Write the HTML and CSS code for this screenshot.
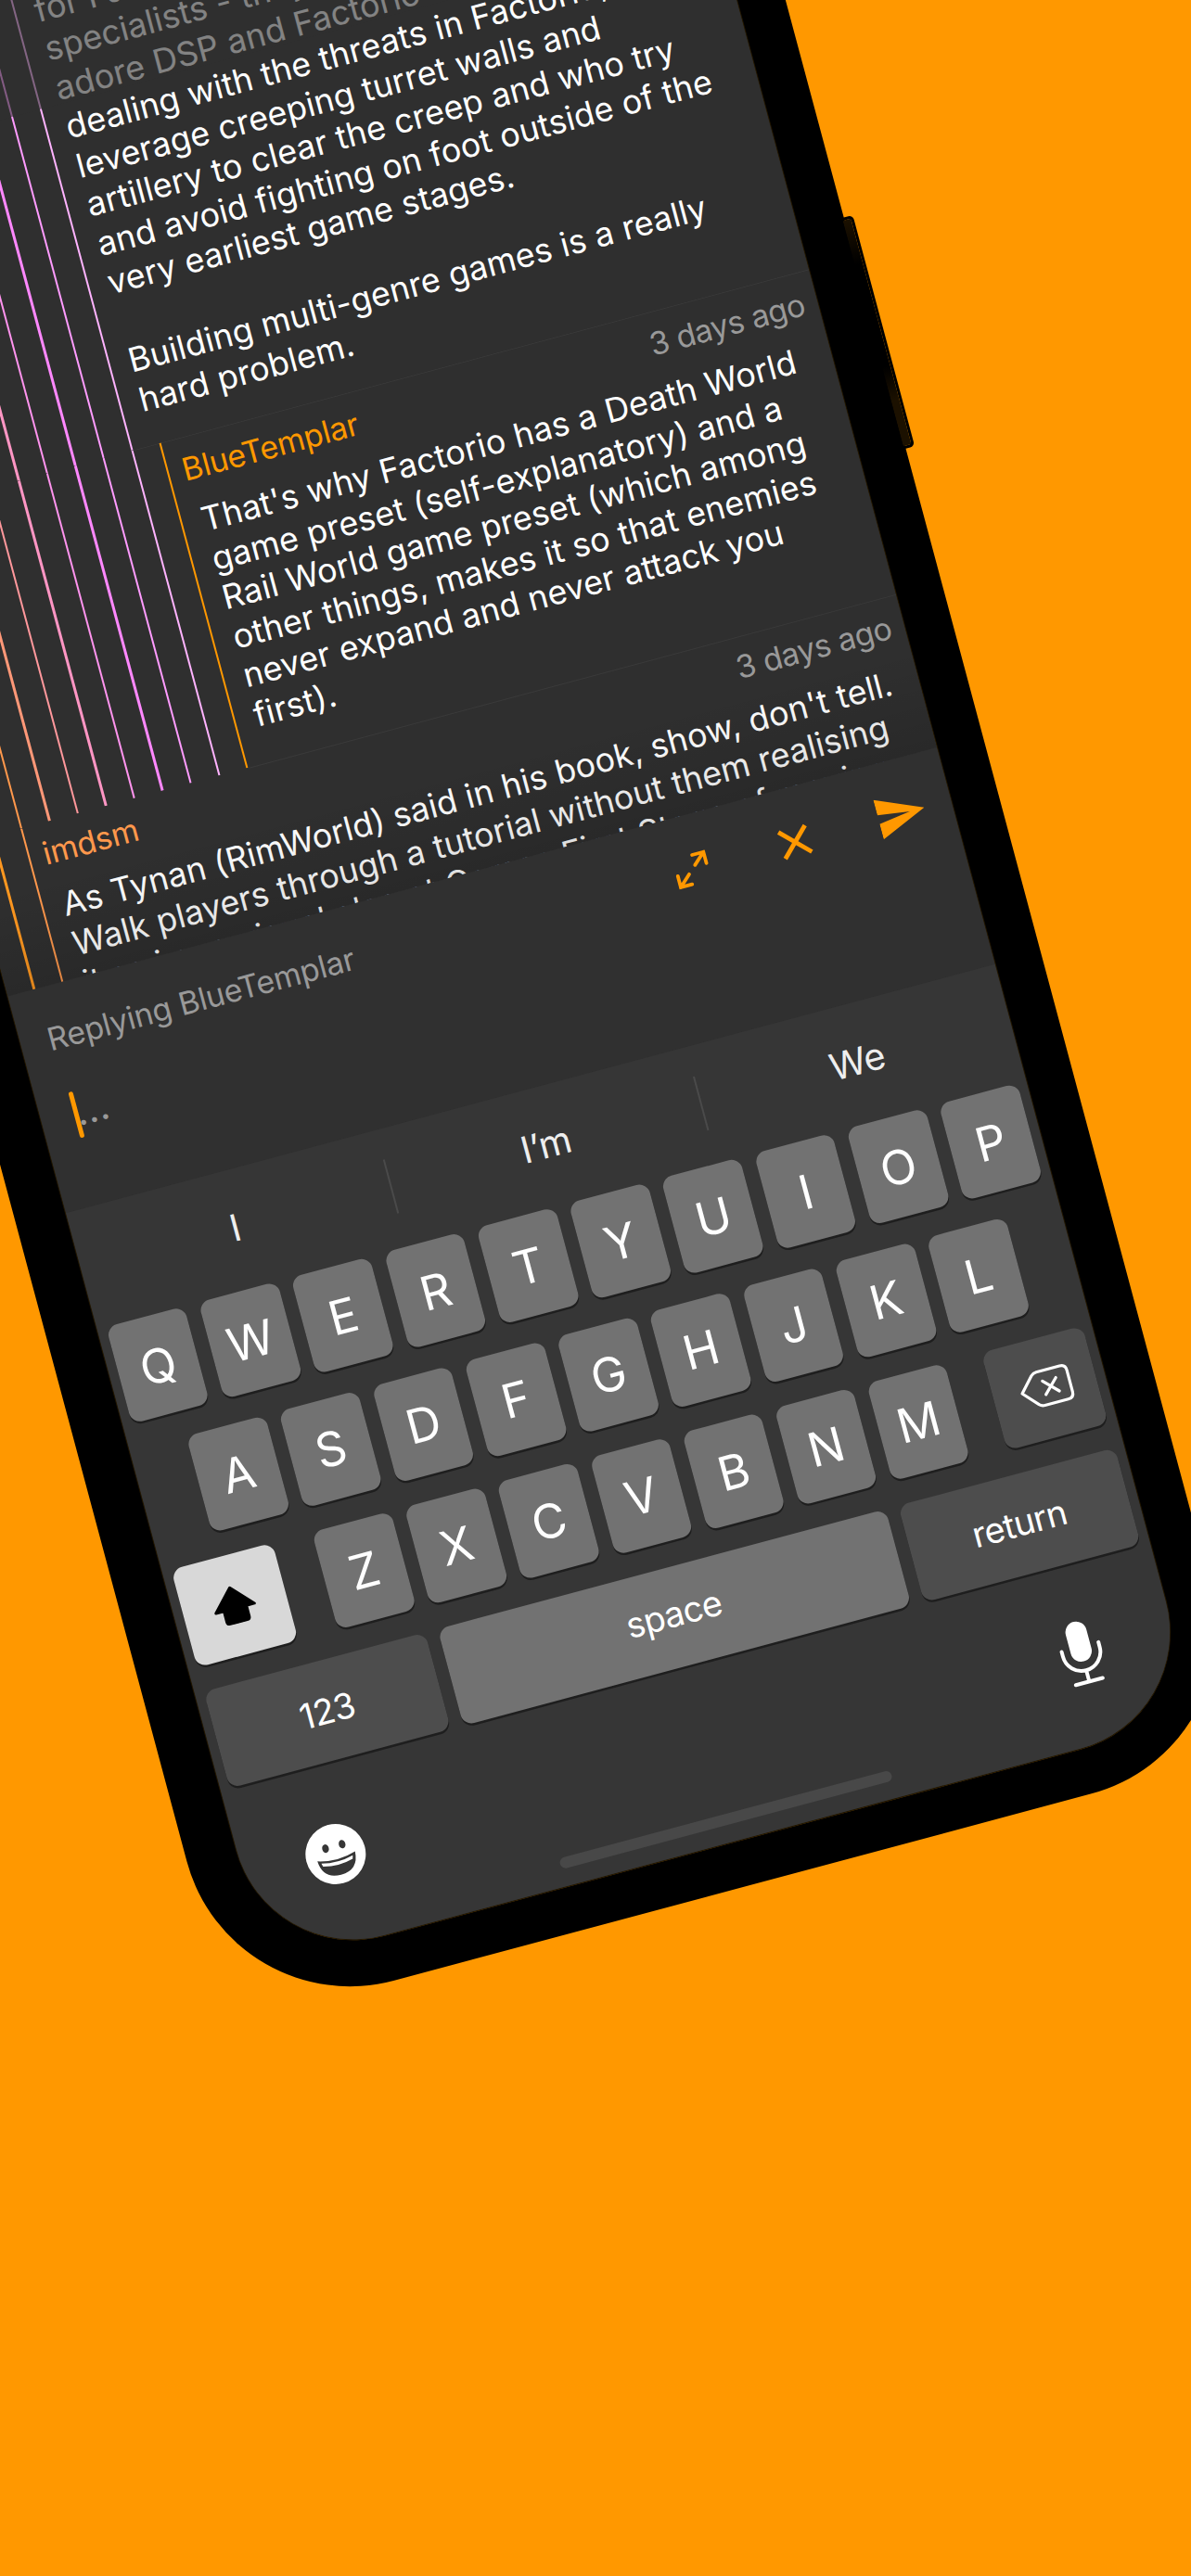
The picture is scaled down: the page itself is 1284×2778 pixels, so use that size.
FILE: index.html
```
<!DOCTYPE html>
<html lang="en">
<head>
<meta charset="utf-8">
<title>Reply</title>
<link rel="stylesheet" href="styles.css">
</head>
<body>
<div class="stage">
<div class="phone">
  <div class="side-button"></div>
  <div class="screen">
    <div class="thread">
      <article class="comment first">
        <div class="rails"><i class="r1"></i><i class="r2"></i><i class="r3"></i><i class="r4"></i><i class="r5"></i><i class="r6"></i><i class="r7"></i><i class="r8"></i><i class="r9"></i></div>
        <div class="content">
          <p class="text"><span>for Factory</span><span>specialists - they</span><span>adore DSP and Factorio</span><span>dealing with the threats in Factorio,</span><span>leverage creeping turret walls and</span><span>artillery to clear the creep and who try</span><span>and avoid fighting on foot outside of the</span><span>very earliest game stages.</span><span>&nbsp;</span><span>Building multi-genre games is a really</span><span>hard problem.</span></p>
        </div>
      </article>
      <article class="comment second">
        <div class="rails"><i class="r1"></i><i class="r2"></i><i class="r3"></i><i class="r4"></i><i class="r5"></i><i class="r6"></i><i class="r7"></i><i class="r8"></i><i class="r9"></i><i class="r10"></i></div>
        <div class="content">
          <header><b class="name own">BlueTemplar</b><time>3 days ago</time></header>
          <p class="text"><span>That's why Factorio has a Death World</span><span>game preset (self-explanatory) and a</span><span>Rail World game preset (which among</span><span>other things, makes it so that enemies</span><span>never expand and never attack you</span><span>first).</span></p>
        </div>
      </article>
      <article class="comment third">
        <div class="rails"><i class="r1"></i><i class="r2"></i></div>
        <div class="content">
          <header><b class="name other">imdsm</b><time>3 days ago</time></header>
          <p class="text"><span>As Tynan (RimWorld) said in his book, show, don't tell.</span><span>Walk players through a tutorial without them realising</span><span>it as i.e. a visual also at Games First Stage of moving</span></p>
        </div>
      </article>
      <div class="dim"></div>
      <div class="shade"></div>
    </div>
    <section class="reply">
      <div class="reply-head">
        <span class="replying">Replying BlueTemplar</span>
        <div class="actions">
          <svg width="44" height="40" viewBox="-22 -20 44 40" fill="none" stroke="#ff9800" stroke-width="3.8" stroke-linecap="round" stroke-linejoin="miter"><path d="M4.300 -4L16.700 -15.300M4 -15.300H16.700V-2.800M-4.300 4L-16.700 15.300M-4 15.300H-16.700V2.800"/></svg>
          <svg width="36" height="36" viewBox="-18 -18 36 36" stroke="#ff9800" stroke-width="4.800"><path d="M-14.800 -14.800L14.800 14.800M14.800 -14.800L-14.800 14.800"/></svg>
          <svg width="51" height="44" viewBox="0 0 51 44" fill="#ff9800"><path d="M0 0L51 22L0 44V26.800L35 22L0 17.200Z"/></svg>
        </div>
      </div>
      <div class="field"><i class="caret"></i><span>...</span></div>
    </section>
    <section class="keyboard">
      <div class="suggest"><span>I</span><span>I’m</span><span>We</span></div>
      <div class="keys">
        <div class="row"><kbd>Q</kbd><kbd>W</kbd><kbd>E</kbd><kbd>R</kbd><kbd>T</kbd><kbd>Y</kbd><kbd>U</kbd><kbd>I</kbd><kbd>O</kbd><kbd>P</kbd></div>
        <div class="row middle"><kbd>A</kbd><kbd>S</kbd><kbd>D</kbd><kbd>F</kbd><kbd>G</kbd><kbd>H</kbd><kbd>J</kbd><kbd>K</kbd><kbd>L</kbd></div>
        <div class="row">
          <kbd class="shift"><svg width="48" height="42" viewBox="0 0 48 42"><path d="M24 2L45.500 25H36.500V37Q36.500 40 33.500 40H14.500Q11.500 40 11.500 37V25H2.500Z" stroke="#000" stroke-width="3" stroke-linejoin="round"/></svg></kbd>
          <div class="letters"><kbd>Z</kbd><kbd>X</kbd><kbd>C</kbd><kbd>V</kbd><kbd>B</kbd><kbd>N</kbd><kbd>M</kbd></div>
          <kbd class="delete"><svg width="58" height="42" viewBox="0 0 58 42" fill="none" stroke="#fff" stroke-width="3.200" stroke-linecap="round" stroke-linejoin="round"><path d="M2.500 21L17 5Q19.500 2.500 23 2.500H49Q55.500 2.500 55.500 9V33Q55.500 39.500 49 39.500H23Q19.500 39.500 17 37ZM27 13.500L42 28.500M42 13.500L27 28.500"/></svg></kbd>
        </div>
        <div class="row wide"><kbd class="num">123</kbd><kbd class="space">space</kbd><kbd class="return">return</kbd></div>
      </div>
      <div class="dock">
        <svg class="emoji" width="66" height="66" viewBox="0 0 66 66"><circle cx="33" cy="33" r="32.500" fill="#fff"/><ellipse cx="24" cy="24.500" rx="3.600" ry="4.600" fill="#363636"/><ellipse cx="42.500" cy="24.500" rx="3.600" ry="4.600" fill="#363636"/><path d="M12 35.500Q33 42 54 35.500Q53 56 33 56Q13 56 12 35.500Z" fill="#363636"/><path d="M15.500 39Q33 43.500 50.500 39L49.500 42.500Q33 47 16.500 42.500Z" fill="#fff"/></svg>
        <svg width="50" height="74" viewBox="0 0 50 74" fill="none" stroke="#fff" stroke-width="4" stroke-linecap="round"><rect x="13.500" y="3" width="23" height="44" rx="11.500" fill="#fff" stroke="none"/><path d="M4.500 31V36.500A20.500 20.500 0 0 0 45.500 36.500V31M25 57V69.500M10 69.500H40"/></svg>
      </div>
      <div class="home"></div>
    </section>
  </div>
</div>
</div>
</body>
</html>
```
FILE: styles.css
```
* { box-sizing: border-box; }
html, body { margin: 0; height: 2778px; overflow: hidden; background: #ff9800; }
body { width: 1284px; font-family: Inter, "Liberation Sans", sans-serif; color: #fff; }
.stage { width: 1284px; height: 2778px; transform: rotate(-15deg); transform-origin: 0 0; }
.phone {
  position: relative;
  width: 1143px; height: 2272.5px;
  margin-left: -325px; top: -100px;
  padding: 0 51px 50px 54.5px;
  background: #000;
  border-radius: 0 0 182px 182px;
}
.side-button {
  position: absolute; left: 1138px; top: 562px; width: 14.5px; height: 258px;
  border-radius: 5px; border: 3px solid #000;
  background: linear-gradient(#1c1100, #000 20%, #000 65%, #1c1100 80%);
}
.screen {
  width: 1037px; height: 2222.5px; overflow: hidden;
  display: flex; flex-direction: column;
  background: #303030;
  border-radius: 0 0 130px 130px;
  box-shadow: 0 0 0 1px #241800, 0 1px 0 0 #6a4200;
}

/* comment thread */
.thread {
  position: relative; height: 1139.7px; overflow: hidden; flex: none;
  display: grid; grid-template-rows: 606px 362.5px 171.2px;
  background: #2f2f2f;
}
.comment { display: flex; overflow: hidden; }
.rails { display: flex; gap: 29.15px; padding-left: 28.8px; flex: none; }
.rails i { width: 2.4px; }
.r1 { background: #ff9820; } .r2 { background: #ff984c; } .r3 { background: #ff9878; }
.r4 { background: #ff989c; } .r5 { background: #ff96c4; } .r6 { background: #ff94ee; }
.r7 { background: #ff88ff; } .r8 { background: #ff9cff; } .r9 { background: #ffb4ff; }
.r10 { background: #ff9800; }
.content { flex: 1; min-width: 0; padding: 0 14px 0 14.5px; }
.first .content { display: flex; align-items: flex-end; padding-bottom: 28px; }
.second .content { border-top: 1px solid #3a3a3a; margin-left: -31.5px; padding-left: 46px; }
.second .rails i { position: relative; z-index: 1; }
.third .content { position: relative; }
.third::before { content: ""; position: absolute; left: 315px; right: 0; top: 968.5px; height: 1px; background: #3a3a3a; }
header { display: flex; justify-content: space-between; align-items: center; height: 44px; margin-top: 11px; font-size: 34px; }
.name { font-weight: 400; letter-spacing: -.2px; }
.own { color: #ff9800; }
.other { color: #ff984c; }
time { color: #999; letter-spacing: -.5px; }
.text { margin: 15px 0 0; padding-left: 6px; font-size: 36px; line-height: 43.5px; letter-spacing: .14px; }
.third .text { margin-top: 15.5px; }
.text span { display: block; white-space: nowrap; }
.dim { position: absolute; left: 0; right: 0; top: 0; height: 224.5px; background: rgba(48,48,48,.6); }
.shade { position: absolute; left: 0; right: 0; bottom: 0; height: 110px; background: linear-gradient(rgba(0,0,0,0), rgba(0,0,0,.13)); }

/* reply panel */
.reply { height: 242.8px; flex: none; background: #303030; padding: 36px 30px 0 30px; }
.reply-head { display: flex; justify-content: space-between; height: 46px; align-items: center; }
.replying { color: #999; font-size: 34px; letter-spacing: -.2px; padding-bottom: 4px; }
.actions { display: flex; align-items: center; gap: 75px; }
.field { display: flex; align-items: center; margin-top: 35px; padding-left: 6.5px; height: 51px; }
.caret { width: 5px; height: 51px; border-radius: 3px; background: #ff9800; position: relative; }
.field span { color: #999; font-size: 38px; font-weight: 500; letter-spacing: .8px; margin: 0 0 2px -3px; }

/* keyboard */
.keyboard { flex: 1; background: #363636; display: flex; flex-direction: column; }
.suggest { display: grid; grid-template-columns: repeat(3, 1fr); height: 60px; margin-top: 32.5px; }
.suggest span { display: flex; align-items: center; justify-content: center; font-size: 40px; color: #eee; letter-spacing: -.3px; }
.suggest span + span { border-left: 2px solid #4a4a4a; }
.suggest span:last-child { padding-left: 4px; }
.keys { display: flex; flex-direction: column; gap: 27.1px; padding: 37px 9.6px 0 10.2px; }
.row { display: flex; gap: 15.6px; height: 108.5px; justify-content: space-between; }
.middle { padding: 0 50px 0 53.5px; }
.wide { gap: 14.3px; }
.letters { display: flex; gap: 15.6px; width: 706px; margin-left: 4px; }
kbd {
  flex: 1; display: flex; align-items: center; justify-content: center;
  background: #727272; border-radius: 12px; box-shadow: 0 2.5px 0 #1e1e1e;
  font: 400 51px Inter, sans-serif;
}
.shift, .delete { flex: 0 0 113px; }
.shift { background: #d8d8d8; }
.delete { padding-left: 3px; }
.delete, .num, .return { background: #4d4d4d; }
.num, .space, .return { font-size: 38px; letter-spacing: -.7px; }
.num { flex: 0 0 247px; }
.space { padding-bottom: 8px; }
.return { flex: 0 0 241.5px; padding-bottom: 5px; }
.dock { display: flex; justify-content: space-between; align-items: center; height: 74px; margin: 58.4px 76.5px 0 69.5px; }
.emoji { margin-top: 4px; }
.home { width: 370px; height: 12.5px; border-radius: 7px; background: #484848; margin: 32px auto 0; }
```
